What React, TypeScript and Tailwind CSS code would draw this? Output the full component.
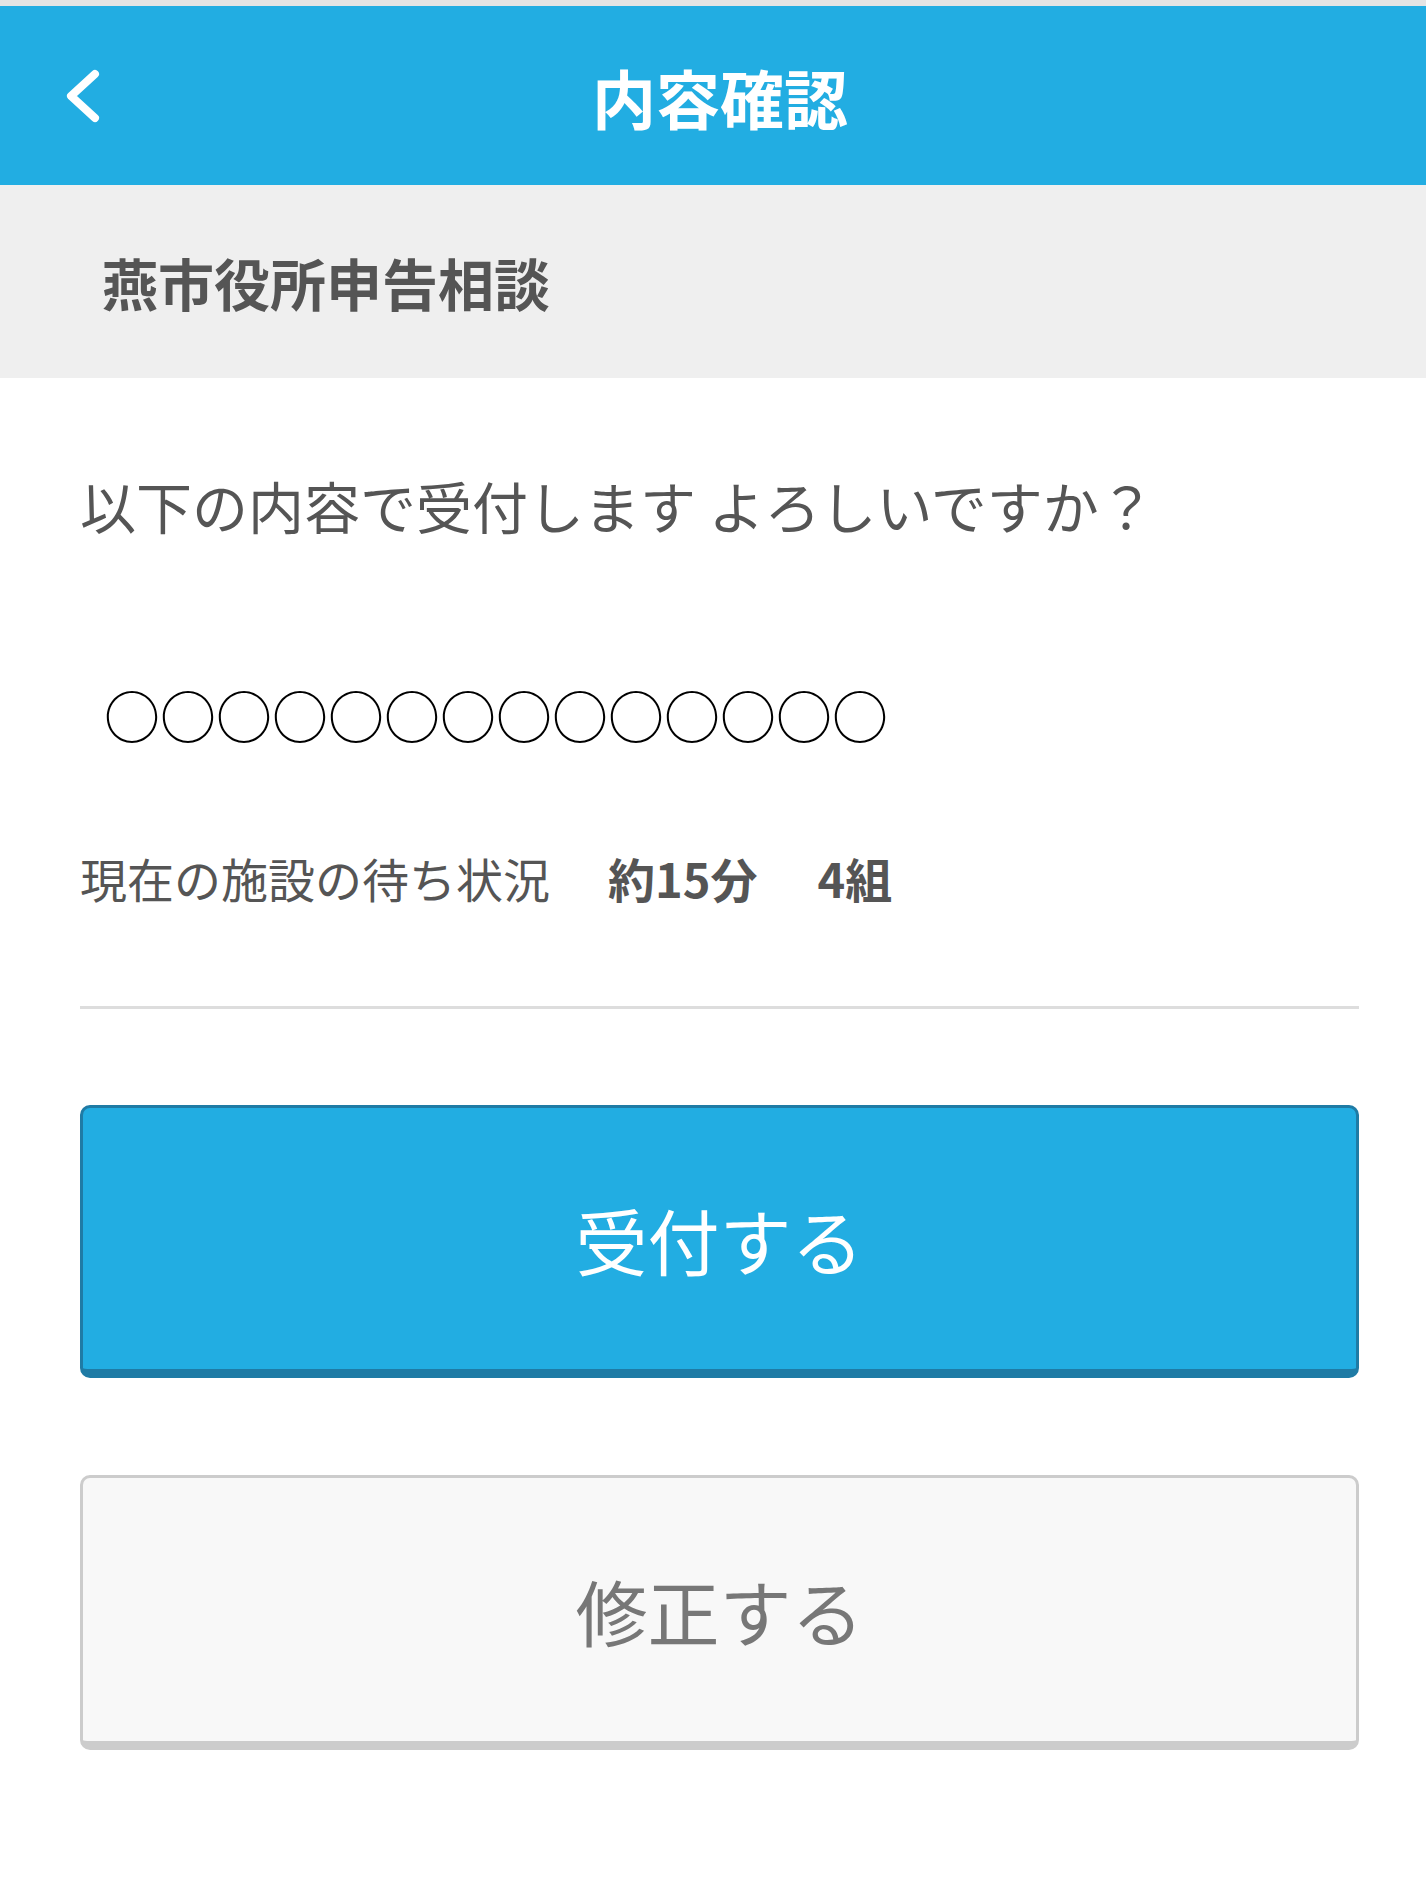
import React from "react";

const font = "font-['Noto_Sans_CJK_JP','Noto_Sans',sans-serif]";

function BackIcon() {
    return (
        <svg width="40" height="60" viewBox="0 0 40 60" fill="none">
            <polyline
                points="33,8 9,30 33,52"
                stroke="#ffffff"
                strokeWidth="8"
                strokeLinecap="round"
                strokeLinejoin="round"
            />
        </svg>
    );
}

export default function App() {
    const circles = new Array(14).fill("○").join("");

    return (
        <div className={`${font} w-full bg-white`}>
            {/* status strip */}
            <div className="h-[6px] bg-[#e4e4e4]" />

            {/* header */}
            <div className="h-[179px] bg-[#22ade2] grid grid-cols-[1fr_auto_1fr] items-center">
                <div className="pl-[62px] flex items-center">
                    <BackIcon />
                </div>
                <h1 className="text-[64px] leading-none font-bold text-white pl-[14px]">{`内容確認`}</h1>
                <div />
            </div>

            {/* facility name */}
            <div className="h-[193px] bg-[#efefef] flex items-center pl-[102px]">
                <p className="text-[56px] leading-none font-bold text-[#555555]">{`燕市役所申告相談`}</p>
            </div>

            <div className="pl-[80px] pr-[67px] pb-[150px] flex flex-col">
                <p className="mt-[99px] text-[56px] leading-none text-[#555555]">
                    {`以下の内容で受付します よろしいですか？`}
                </p>

                <p className="mt-[153px] pl-[24px] text-[56px] leading-none text-black">{circles}</p>

                <p className="mt-[112px] text-[47px] leading-none text-[#555555] flex items-center">
                    <span>{`現在の施設の待ち状況`}</span>
                    <span className="ml-[58px] font-bold">{`約15分`}</span>
                    <span className="ml-[60px] font-bold">{`4組`}</span>
                </p>

                <div className="mt-[105px] h-[3px] bg-[#dddddd]" />

                <button className="mt-[96px] h-[273px] w-full rounded-[10px] bg-[#22ade2] border-[3px] border-b-[9px] border-[#1f7ba5] flex items-center justify-center">
                    <span className="text-[72px] leading-none text-white">{`受付する`}</span>
                </button>

                <button className="mt-[97px] h-[275px] w-full rounded-[10px] bg-[#f8f8f8] border-[3px] border-b-[9px] border-[#cccccc] flex items-center justify-center">
                    <span className="text-[72px] leading-none text-[#777777]">{`修正する`}</span>
                </button>
            </div>
        </div>
    );
}
